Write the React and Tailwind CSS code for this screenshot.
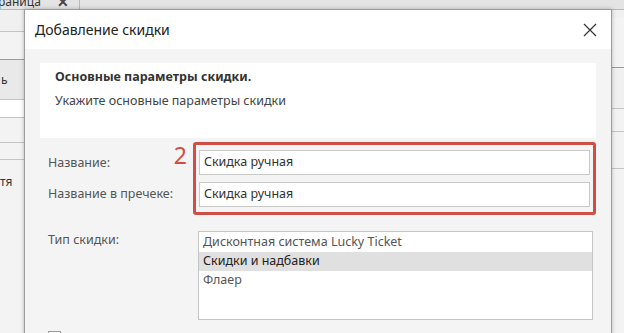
import React from "react";

function BgLeft() {
  return (
    <div className="flex w-[24px] flex-col text-[12px] text-[#333]">
      <div className="h-[22px] border-b border-[#c4c4c4] bg-[#f0f0f0]"></div>
      <div className="h-[28px] border-b border-[#9a9a9a] bg-[#f3f3f3]"></div>
      <div className="flex h-[40px] items-center border-b border-[#c4c4c4] bg-[#e9e9e9] pl-[1px]">ь</div>
      <div className="h-[18px] border-b border-[#c4c4c4] bg-white"></div>
      <div className="h-[25px] border-b border-[#c4c4c4] bg-[#f3f3f3]"></div>
      <div className="h-[17px] border-b border-[#c4c4c4] bg-[#f3f3f3]"></div>
      <div className="flex h-[30px] items-end bg-[#f3f3f3] leading-[16px]">тя</div>
      <div className="flex-1 bg-[#f3f3f3]"></div>
    </div>
  );
}

function BgRight() {
  return (
    <div className="ml-auto flex w-[12px] flex-col">
      <div className="h-[8px] bg-[#f0f0f0]"></div>
      <div className="h-[50px] border-b border-[#9a9a9a] bg-[#f3f3f3]"></div>
      <div className="h-[41px] border-b border-[#c4c4c4] bg-[#f0f0f0]"></div>
      <div className="h-[23px] border-b border-[#c4c4c4] bg-[#f3f3f3]"></div>
      <div className="h-[37px] border-b border-[#c4c4c4] bg-[#f3f3f3]"></div>
      <div className="flex-1 bg-[#f3f3f3]"></div>
    </div>
  );
}

function TextBox({ value }) {
  return (
    <div className="flex h-[25px] items-center border border-[#c9c9c9] bg-white pl-[4px] text-[12.5px] text-[#333]">
      {value}
    </div>
  );
}

export default function App() {
  const items = ["Дисконтная система Lucky Ticket", "Скидки и надбавки", "Флаер"];
  return (
    <div
      className="relative flex h-[333px] w-[624px] flex-col overflow-hidden bg-[#f0f0f0]"
      style={{ fontFamily: '"Noto Sans", "Open Sans", sans-serif' }}
    >
      {/* tab strip behind the dialog */}
      <div className="flex h-[10px] overflow-hidden border-b border-[#b8b8b8] bg-[#e4e4e4]">
        <div className="flex w-[80px] items-end justify-between border-r border-[#b8b8b8] pr-[10px] text-[12px] leading-[15px] text-[#333]">
          <span className="-ml-[2px]">раница</span>
          <span className="text-[14px] font-bold text-[#444]">✕</span>
        </div>
      </div>
      <div className="flex flex-1">
        <BgLeft />
        <BgRight />
      </div>

      {/* modal dialog */}
      <div className="absolute left-[24px] top-[9px] flex h-[340px] w-[588px] flex-col border border-[#9c9c9c] bg-[#f4f4f4] shadow-[0_0_4px_rgba(0,0,0,0.25)]">
        <div className="flex h-[39px] shrink-0 items-center justify-between bg-white pl-[10px] pr-[14px]">
          <span className="text-[14px] text-[#222]">Добавление скидки</span>
          <svg width="14" height="14" viewBox="0 0 14 14" className="mt-[1px]">
            <path d="M1 1L13 13M13 1L1 13" stroke="#333" strokeWidth="1.2" fill="none" />
          </svg>
        </div>

        <div className="flex flex-col pl-[15px] pr-[15px] pt-[14px]">
          <div className="flex h-[75px] flex-col bg-white pl-[15px] pt-[5px] text-[12.5px] leading-[18px]">
            <div className="font-bold text-[#333]">Основные параметры скидки.</div>
            <div className="mt-[6px] text-[#444]">Укажите основные параметры скидки</div>
          </div>

          <div className="mt-[4px] flex">
            <div className="flex w-[128px] flex-col whitespace-nowrap pl-[8px] pt-[9px] text-[12.5px] text-[#555]">
              <div className="flex h-[25px] items-center">Название:</div>
              <div className="mt-[6px] flex h-[25px] items-center">Название в пречеке:</div>
            </div>
            <div className="flex w-[25px] justify-center text-[23px] leading-[26px] text-[#cf4f47]">2</div>
            <div className="flex w-[405px] flex-col gap-[7px] rounded-[3px] border-[3px] border-[#cf4f47] px-[3px] py-[5px]">
              <TextBox value="Скидка ручная" />
              <TextBox value="Скидка ручная" />
            </div>
          </div>

          <div className="mt-[16px] flex">
            <div className="w-[158px] pl-[8px] text-[12.5px] text-[#555]">Тип скидки:</div>
            <div className="flex h-[89px] w-[395px] flex-col border border-[#c4c4c4] bg-white pt-[1px] text-[12.5px]">
              {items.map((t, i) => (
                <div
                  key={t}
                  className={
                    "flex h-[19px] items-center pl-[4px] " +
                    (i === 1 ? "bg-[#e0e0e0] text-[#222]" : "text-[#555]")
                  }
                >
                  {t}
                </div>
              ))}
            </div>
          </div>

          <div className="mt-[11px] flex items-start">
            <div className="ml-[8px] h-[13px] w-[13px] border border-[#9a9a9a] bg-white"></div>
          </div>
        </div>
      </div>
    </div>
  );
}
